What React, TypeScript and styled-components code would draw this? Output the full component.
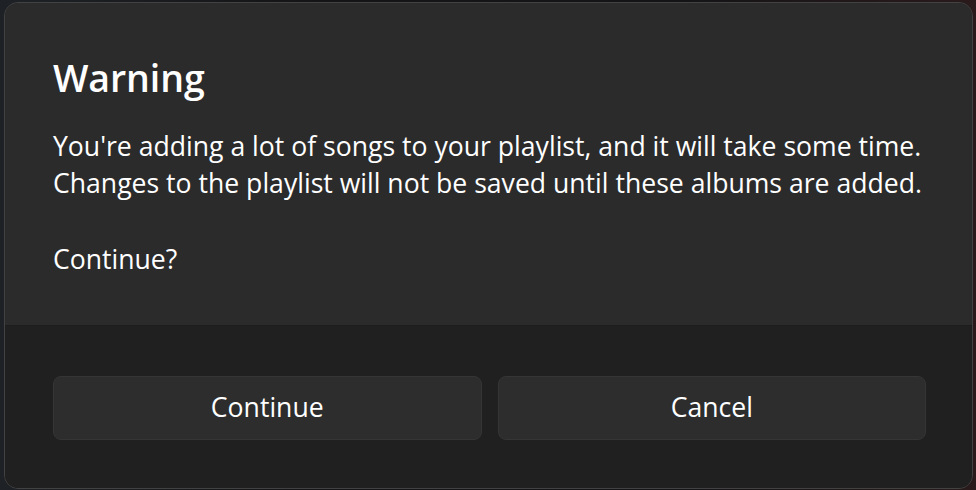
import React from "react";
import styled, { createGlobalStyle } from "styled-components";

const Global = createGlobalStyle`
  html, body {
    margin: 0;
    padding: 0;
    background: #161618;
    font-family: "Open Sans", "Noto Sans", sans-serif;
  }
`;

const Backdrop = styled.div`
  width: 976px;
  height: 490px;
  box-sizing: border-box;
  padding: 2px 3px 1px 4px;
  background: linear-gradient(90deg, #1e2226 0%, #151517 30%, #141416 70%, #2a1a1c 100%);
`;

const Dialog = styled.div`
  width: 969px;
  height: 487px;
  box-sizing: border-box;
  border: 1px solid #424242;
  border-radius: 14px;
  overflow: hidden;
  display: flex;
  flex-direction: column;
  background: #2b2b2b;
  color: #ffffff;
`;

const Content = styled.div`
  height: 322px;
  box-sizing: border-box;
  padding: 50px 46px 0 48px;
  background: #2b2b2b;
`;

const Title = styled.h1`
  margin: 0;
  font-size: 37.5px;
  font-weight: 600;
  line-height: 50px;
  letter-spacing: -0.1px;
`;

const Body = styled.div`
  margin-top: 25px;
  font-size: 26.6px;
  line-height: 37px;
  font-weight: 400;
`;

const Line = styled.div<{ $gap?: boolean }>`
  white-space: nowrap;
  min-height: ${(p) => (p.$gap ? "39px" : "37px")};
`;

const Footer = styled.div`
  flex: 1;
  box-sizing: border-box;
  padding: 50px 46px 0 48px;
  background: #202020;
  border-top: 1px solid #1d1d1d;
  display: grid;
  grid-template-columns: 1fr 1fr;
  column-gap: 16px;
  align-content: start;
`;

const Button = styled.button`
  height: 64px;
  box-sizing: border-box;
  border: 1px solid #353535;
  border-radius: 8px;
  background: #2d2d2d;
  color: #ffffff;
  font-family: "Open Sans", "Noto Sans", sans-serif;
  font-size: 26.6px;
  font-weight: 400;
  display: flex;
  align-items: center;
  justify-content: center;
  padding: 0 0 2px 0;
  cursor: pointer;
`;

export default function App() {
  return (
    <>
      <Global />
      <Backdrop>
        <Dialog>
          <Content>
            <Title>Warning</Title>
            <Body>
              <Line>You're adding a lot of songs to your playlist, and it will take some time.</Line>
              <Line>Changes to the playlist will not be saved until these albums are added.</Line>
              <Line $gap />
              <Line>Continue?</Line>
            </Body>
          </Content>
          <Footer>
            <Button>Continue</Button>
            <Button>Cancel</Button>
          </Footer>
        </Dialog>
      </Backdrop>
    </>
  );
}
